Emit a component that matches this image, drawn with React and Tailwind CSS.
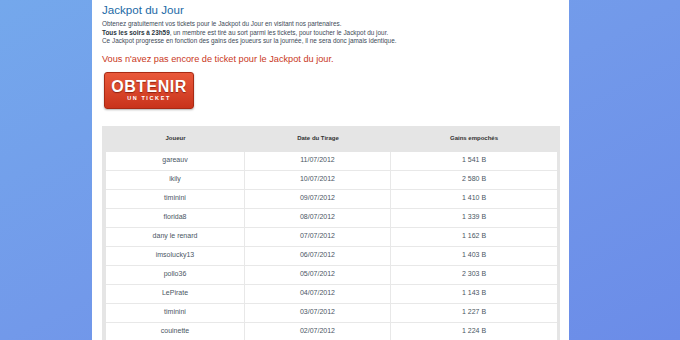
const rows = [
  ["gareauv", "11/07/2012", "1 541 B"],
  ["ikily", "10/07/2012", "2 580 B"],
  ["timinini", "09/07/2012", "1 410 B"],
  ["florida8", "08/07/2012", "1 339 B"],
  ["dany le renard", "07/07/2012", "1 162 B"],
  ["imsolucky13", "06/07/2012", "1 403 B"],
  ["pollo36", "05/07/2012", "2 303 B"],
  ["LePirate", "04/07/2012", "1 143 B"],
  ["timinini", "03/07/2012", "1 227 B"],
  ["couinette", "02/07/2012", "1 224 B"],
];

function TicketButton() {
  return (
    <button className="mt-[7px] ml-[2px] w-[90px] h-[37px] rounded-[3px] border border-[#a82a14] bg-gradient-to-b from-[#e9583a] to-[#c9331b] shadow-[0_1px_2px_rgba(0,0,0,0.3)] flex flex-col items-center justify-center">
      <span className="text-white font-bold text-[16px] leading-[15px] tracking-[0.5px] [text-shadow:0_1px_1px_rgba(90,10,0,0.6)]">
        OBTENIR
      </span>
      <span className="text-white font-bold text-[5.5px] leading-[7px] tracking-[1.6px] mt-[1px]">
        UN TICKET
      </span>
    </button>
  );
}

export default function App() {
  return (
    <div className="h-[340px] overflow-hidden bg-gradient-to-br from-[#74a8ec] via-[#7299ea] to-[#6b8ce8] font-['Liberation_Sans',Arial,sans-serif]">
      <div className="ml-[92px] w-[477px] h-full bg-white pl-[10px] pr-[9px] pt-[3px]">
        <h1 className="text-[#1c6aa6] text-[11.6px] leading-[14px]">Jackpot du Jour</h1>

        <div className="mt-[3px] text-[6.4px] leading-[8.5px] text-[#3d4a57]">
          <p>Obtenez gratuitement vos tickets pour le Jackpot du Jour en visitant nos partenaires.</p>
          <p>
            <b className="text-[#2a3540]">Tous les soirs à 23h59</b>, un membre est tiré au sort parmi les tickets, pour toucher le Jackpot du jour.
          </p>
          <p>Ce Jackpot progresse en fonction des gains des joueurs sur la journée, il ne sera donc jamais identique.</p>
        </div>

        <p className="mt-[7px] text-[#c9371c] text-[9.2px] leading-[12px]">
          Vous n'avez pas encore de ticket pour le Jackpot du jour.
        </p>

        <TicketButton />

        {/* tableau des gagnants */}
        <div className="mt-[17px] bg-[#e5e5e5] pl-[4px] pr-[3px]">
          <div className="grid grid-cols-[139px_146px_166px] h-[26px] items-center text-[6px] font-bold text-[#333]">
            <div className="text-center">Joueur</div>
            <div className="text-center">Date du Tirage</div>
            <div className="text-center">Gains empochés</div>
          </div>
          <div className="bg-white">
            {rows.map((r, i) => (
              <div
                key={i}
                className="grid grid-cols-[139px_146px_166px] h-[19px] border-b border-[#e8e8e8] text-[7px] text-[#4a5663]"
              >
                <div className="flex items-center justify-center border-r border-[#e8e8e8]">{r[0]}</div>
                <div className="flex items-center justify-center border-r border-[#e8e8e8]">{r[1]}</div>
                <div className="flex items-center justify-center">{r[2]}</div>
              </div>
            ))}
          </div>
        </div>
      </div>
    </div>
  );
}
